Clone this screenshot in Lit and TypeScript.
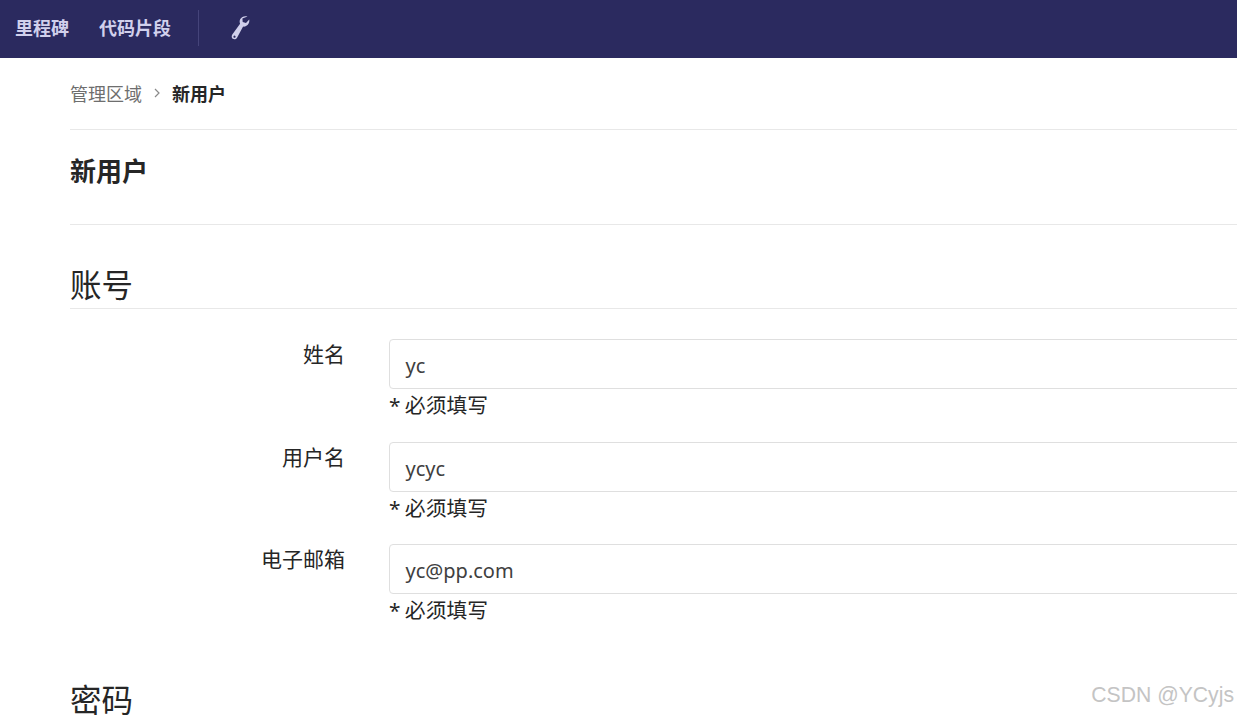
import { LitElement, html, css } from "lit";
import { customElement } from "lit/decorators.js";

@customElement("app-root")
export class AppRoot extends LitElement {
  static styles = css`
    :host { display: block; width: 1237px; height: 715px; overflow: hidden; position: relative; background: #fff; font-family: "Noto Sans", "Noto Sans CJK SC", sans-serif; color: #262626; }
    .nav { height: 58px; background: #2b2a5f; display: flex; align-items: center; padding-left: 15px; }
    .nav a { font-size: 18px; font-weight: 700; color: #d1d0ec; line-height: 24px; position: relative; top: -1px; }
    .nav a + a { margin-left: 30px; }
    .sep { width: 1px; height: 36px; background: #45447a; margin: 0 31px 0 27px; position: relative; top: -1px; }
    .nav svg { display: block; width: 20px; height: 24px; position: relative; top: -1px; }
    .main { margin-left: 70px; width: 1400px; }
    .crumbs { height: 72px; box-sizing: border-box; padding-bottom: 2px; border-bottom: 1px solid #e8e8e8; display: flex; align-items: center; font-size: 18px; color: #6e6e6e; }
    .crumbs svg { width: 10px; height: 10px; margin: 0 10px 0 10px; }
    .crumbs b { color: #262626; font-weight: 700; }
    .title { height: 94px; border-bottom: 1px solid #e8e8e8; font-size: 26px; font-weight: 700; line-height: 83px; color: #262626; }
    h2 { margin: 0; font-size: 31.500px; font-weight: 400; color: #262626; line-height: 40px; }
    .sec { margin-top: 40px; height: 43px; border-bottom: 1px solid #e8e8e8; }
    .rows { margin-top: 30px; display: flex; flex-direction: column; gap: 2px; }
    .row { display: grid; grid-template-columns: 275px 1fr; column-gap: 44px; height: 100.5px; }
    .lbl { text-align: right; font-size: 21px; line-height: 31px; color: #262626; }
    .in { height: 48px; border: 1px solid #dfdfdf; border-radius: 4px; background: #fff; padding-left: 15.500px; font-size: 20px; line-height: 52px; color: #404040; }
    .help { font-size: 20.8px; line-height: 33px; color: #262626; word-spacing: -1px; }
    .sec2 { margin-top: 35px; }
    .wm { position: absolute; right: 3px; top: 680px; font-family: "Liberation Sans", sans-serif; font-size: 21.200px; line-height: 30px; color: #c4c4c4; }
  `;

  render() {
    const rows = [["姓名", "yc"], ["用户名", "ycyc"], ["电子邮箱", "yc@pp.com"]];
    return html`
      <div class="nav">
        <a>里程碑</a><a>代码片段</a>
        <div class="sep"></div>
        <svg viewBox="0 0 20 24"><path fill="#d1d0ec" fill-rule="evenodd" d="M17.500.5c-2.800-.9-6 .2-7.200 2.500-.9 1.700-.8 3.400-.2 4.800L2.300 18.500c-1 1.500-.7 3.400.6 4.300s3.100.5 4-.9l6.200-11.300c2.200.2 4.200-.8 5.400-2.800.8-1.300 1-2.800.7-4.200l-3.200 3.400-3.300-1-.3-3.400zM4.500 19.600a1.100 1.100 0 1 0 .01 0z"/></svg>
      </div>
      <div class="main">
        <div class="crumbs">管理区域<svg viewBox="0 0 10 10"><path d="M3 1l4 4-4 4" fill="none" stroke="#8a8a8a" stroke-width="1.200"/></svg><b>新用户</b></div>
        <div class="title">新用户</div>
        <div class="sec"><h2>账号</h2></div>
        <div class="rows">
          ${rows.map(([l, v]) => html`<div class="row"><div class="lbl">${l}</div><div><div class="in">${v}</div><div class="help">* 必须填写</div></div></div>`)}
        </div>
        <h2 class="sec2">密码</h2>
      </div>
      <div class="wm">CSDN @YCyjs</div>
    `;
  }
}
